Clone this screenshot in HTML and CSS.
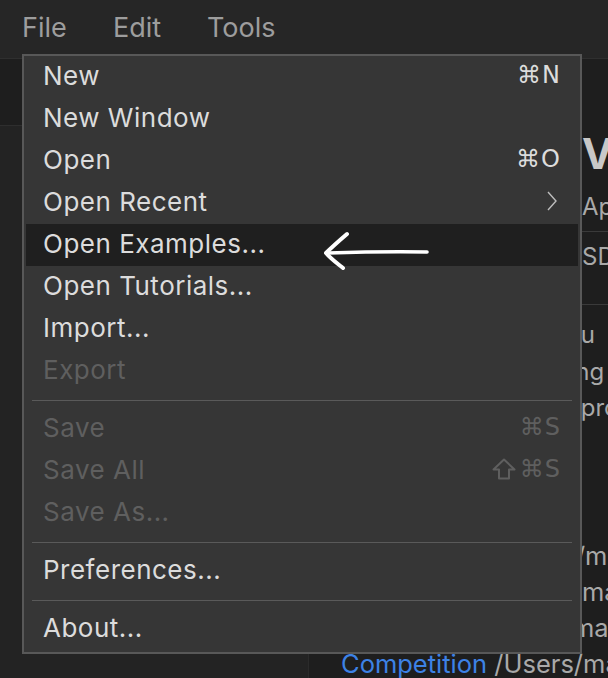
FILE: index.html
```html
<!DOCTYPE html>
<html lang="en">
<head>
    <meta charset="UTF-8">
    <meta name="viewport" content="width=device-width, initial-scale=1.0">
    <title>File menu</title>
    <link rel="stylesheet" href="styles.css">
</head>
<body>
    <div class="app">
        <!-- Barra dei menu -->
        <header class="menubar">
            <span class="menubar-item">File</span>
            <span class="menubar-item">Edit</span>
            <span class="menubar-item">Tools</span>
        </header>

        <div class="workspace">
            <aside class="sidebar">
                <div class="sidebar-toolbar"></div>
                <div class="sidebar-list"></div>
            </aside>

            <main class="panel">
                <div class="panel-row heading">
                    <span class="label">Brain</span>
                    <span class="value">V5 Robot Brain</span>
                </div>
                <div class="panel-row info">
                    <span class="label">Firmware</span>
                    <span class="value">Application 1.1.3</span>
                </div>
                <div class="panel-row info tall">
                    <span class="label">Toolchain</span>
                    <span class="value">SDK 4.0.2</span>
                </div>
                <p class="panel-text">Start here if this is you<br>Try the examples using a board<br>Then write your own program</p>

                <ul class="recent">
                    <li><span class="project">Drive Ahead</span> <span class="path">/Users/mark/vex</span></li>
                    <li><span class="project">Arm Control</span> <span class="path">/Users/mark/vex</span></li>
                    <li><span class="project">Line Follow</span> <span class="path">/Users/mark/vex</span></li>
                    <li><span class="project">Competition</span> <span class="path">/Users/mark/vex</span></li>
                </ul>
            </main>
        </div>

        <!-- Menu a tendina File -->
        <div class="dropdown">
            <div class="item"><span>New</span><span class="shortcut">&#8984;N</span></div>
            <div class="item"><span>New Window</span></div>
            <div class="item"><span>Open</span><span class="shortcut">&#8984;O</span></div>
            <div class="item">
                <span>Open Recent</span>
                <svg class="chevron" width="12" height="20" viewBox="0 0 12 20"><path d="M2 1 L10 10 L2 19" fill="none" stroke="#bdbdbd" stroke-width="1.4"/></svg>
            </div>
            <div class="item active"><span>Open Examples...</span></div>
            <div class="item"><span>Open Tutorials...</span></div>
            <div class="item"><span>Import...</span></div>
            <div class="item disabled"><span>Export</span></div>
            <div class="separator"></div>
            <div class="item disabled"><span>Save</span><span class="shortcut">&#8984;S</span></div>
            <div class="item disabled">
                <span>Save All</span>
                <span class="shortcut">
                    <svg class="shift" width="24" height="22" viewBox="0 0 24 22"><path d="M12 1.5 L22.5 11.5 H17 V20.5 H7 V11.5 H1.5 Z" fill="none" stroke="#5f5f5f" stroke-width="2" stroke-linejoin="round"/></svg>&#8984;S
                </span>
            </div>
            <div class="item disabled"><span>Save As...</span></div>
            <div class="separator"></div>
            <div class="item"><span>Preferences...</span></div>
            <div class="separator"></div>
            <div class="item"><span>About...</span></div>
        </div>

        <!-- Freccia disegnata a mano -->
        <svg class="pointer" width="120" height="50" viewBox="0 0 120 50">
            <path d="M27 6 C20 12 12 19 6 25 C11 31 18 36 23 40" fill="none" stroke="#fff" stroke-width="4" stroke-linecap="round" stroke-linejoin="round"/>
            <path d="M8 25 C40 24 75 23.5 107 24" fill="none" stroke="#fff" stroke-width="3.6" stroke-linecap="round"/>
        </svg>
    </div>
</body>
</html>
```

FILE: styles.css
```css
body {
    margin: 0;
    background: #1f1f1f;
    font-family: 'Inter', 'DejaVu Sans', sans-serif;
    overflow: hidden;
}

.app {
    position: relative;
    width: 608px;
    height: 678px;
    display: flex;
    flex-direction: column;
    overflow: hidden;
}

.menubar {
    display: grid;
    grid-template-columns: 91px 94px auto;
    align-items: center;
    height: 54px;
    padding: 0 0 4px 22px;
    background: #262626;
    border-bottom: 1px solid #2f2f2f;
    color: #9d9d9d;
    font-size: 27px;
}

.workspace {
    flex: 1;
    display: flex;
    min-height: 0;
}

.sidebar {
    width: 308px;
    display: flex;
    flex-direction: column;
    border-right: 1px solid #2b2b2b;
    background: #232323;
}

.sidebar-toolbar {
    height: 66px;
    background: #1e1e1e;
    border-bottom: 1px solid #2e2e2e;
}

.panel {
    flex: 1;
    background: #1e1e1e;
    padding-left: 32px;
    color: #a9a9a9;
    font-size: 24px;
    white-space: nowrap;
    overflow: hidden;
}

.panel-row {
    display: grid;
    grid-template-columns: 241px auto;
    align-items: center;
}

.heading {
    margin-top: 66px;
    height: 56px;
    font-size: 42px;
    font-weight: 700;
    color: #c8c8c8;
}

.info {
    height: 50px;
    border-bottom: 1px solid #3a3a3a;
    margin-left: -20px;
    padding-left: 20px;
}

.info.tall {
    height: 73px;
    align-items: start;
    padding-top: 10px;
    box-sizing: border-box;
}

.panel-text {
    margin: 12px 0 0;
    line-height: 36.5px;
}

.recent {
    list-style: none;
    margin: 111px 0 0;
    padding: 0;
    font-size: 25.5px;
}

.recent li {
    height: 36px;
    line-height: 36px;
}

.project {
    color: #3d82e6;
}

/* Menu a tendina */
.dropdown {
    position: absolute;
    top: 54px;
    left: 22px;
    width: 556px;
    padding: 0 0 2px;
    background: #363636;
    border: 2px solid #585858;
    color: #dcdcdc;
    font-size: 26px;
    letter-spacing: 0.5px;
}

.item {
    display: flex;
    justify-content: space-between;
    align-items: center;
    height: 42px;
    box-sizing: border-box;
    margin: 0 2px;
    padding: 0 17px 4px 17px;
}

.item.active {
    background: #1f1f1f;
}

.item.disabled {
    color: #5f5f5f;
}

.shortcut {
    display: flex;
    align-items: center;
    font-family: 'DejaVu Sans', sans-serif;
    font-size: 24px;
    letter-spacing: 1px;
}

.shift {
    margin-right: 4px;
}

.chevron {
    margin-right: 3px;
}

.separator {
    height: 1px;
    margin: 8px 8px 7px;
    background: #5a5a5a;
}

.pointer {
    position: absolute;
    left: 320px;
    top: 228px;
}
```
